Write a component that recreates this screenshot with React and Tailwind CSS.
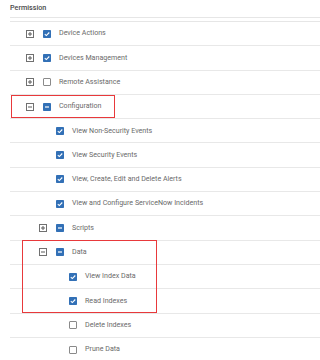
import React from 'react';

const rows = [
  { label: "Device Actions", level: 1, expand: "plus", check: "checked" },
  { label: "Devices Management", level: 1, expand: "plus", check: "checked" },
  { label: "Remote Assistance", level: 1, expand: "plus", check: "empty" },
  { label: "Configuration", level: 1, expand: "minus", check: "partial" },
  { label: "View Non-Security Events", level: 2, check: "checked" },
  { label: "View Security Events", level: 2, check: "checked" },
  { label: "View, Create, Edit and Delete Alerts", level: 2, check: "checked" },
  { label: "View and Configure ServiceNow Incidents", level: 2, check: "checked" },
  { label: "Scripts", level: 2, expand: "plus", check: "partial" },
  { label: "Data", level: 2, expand: "minus", check: "partial" },
  { label: "View Index Data", level: 3, check: "checked" },
  { label: "Read Indexes", level: 3, check: "checked" },
  { label: "Delete Indexes", level: 3, check: "empty" },
  { label: "Prune Data", level: 3, check: "empty" },
];

const indent = { 1: "pl-[16px]", 2: "pl-[29px]", 3: "pl-[42px]" };

function Expander({ type }) {
  return (
    <svg width="8" height="8" viewBox="0 0 8 8" className="shrink-0">
      <rect x="0.5" y="0.5" width="7" height="7" fill="white" stroke="#707070" strokeWidth="1" />
      <line x1="2" y1="4" x2="6" y2="4" stroke="#5a5a5a" strokeWidth="1" />
      {type === "plus" && <line x1="4" y1="2" x2="4" y2="6" stroke="#5a5a5a" strokeWidth="1" />}
    </svg>
  );
}

function Check({ state }) {
  if (state === "empty") {
    return <div className="w-[8px] h-[8px] shrink-0 border border-[#8a8a8a] rounded-[1px] bg-white" />;
  }
  return (
    <svg width="8" height="8" viewBox="0 0 8 8" className="shrink-0">
      <rect x="0" y="0" width="8" height="8" rx="0.8" fill="#3270b6" />
      {state === "checked" ? (
        <path d="M1.8 4.2 L3.3 5.6 L6.3 2.5" fill="none" stroke="white" strokeWidth="1.1" />
      ) : (
        <line x1="2" y1="4" x2="6" y2="4" stroke="white" strokeWidth="1.2" />
      )}
    </svg>
  );
}

export default function App() {
  return (
    <div className="relative w-[320px] h-[360px] overflow-hidden bg-white font-['Roboto',sans-serif]">
      <div className="pl-[10px]">
        <div className="h-[18px] border-b border-[#e6e6e6] flex items-center text-[7.2px] text-[#4a4a4a] font-medium">
          Permission
        </div>
        <div className="h-[3px]" />
        <div className="border-t border-[#e6e6e6]">
          {rows.map((r) => (
            <div
              key={r.label}
              className={`h-[24.3px] border-b border-[#e8e8e8] flex items-center ${indent[r.level]}`}
            >
              <div className="w-[8px] shrink-0">{r.expand && <Expander type={r.expand} />}</div>
              <div className="ml-[9px]">
                <Check state={r.check} />
              </div>
              <span className="ml-[8px] text-[7.1px] text-[#6a6a6a] whitespace-nowrap">{r.label}</span>
            </div>
          ))}
        </div>
      </div>

      {/* highlight boxes */}
      <div className="absolute left-[11px] top-[95px] w-[104px] h-[23px] border-[1.5px] border-[#e8393b]" />
      <div className="absolute left-[22px] top-[240px] w-[135px] h-[73px] border-[1.5px] border-[#e8393b]" />
    </div>
  );
}
